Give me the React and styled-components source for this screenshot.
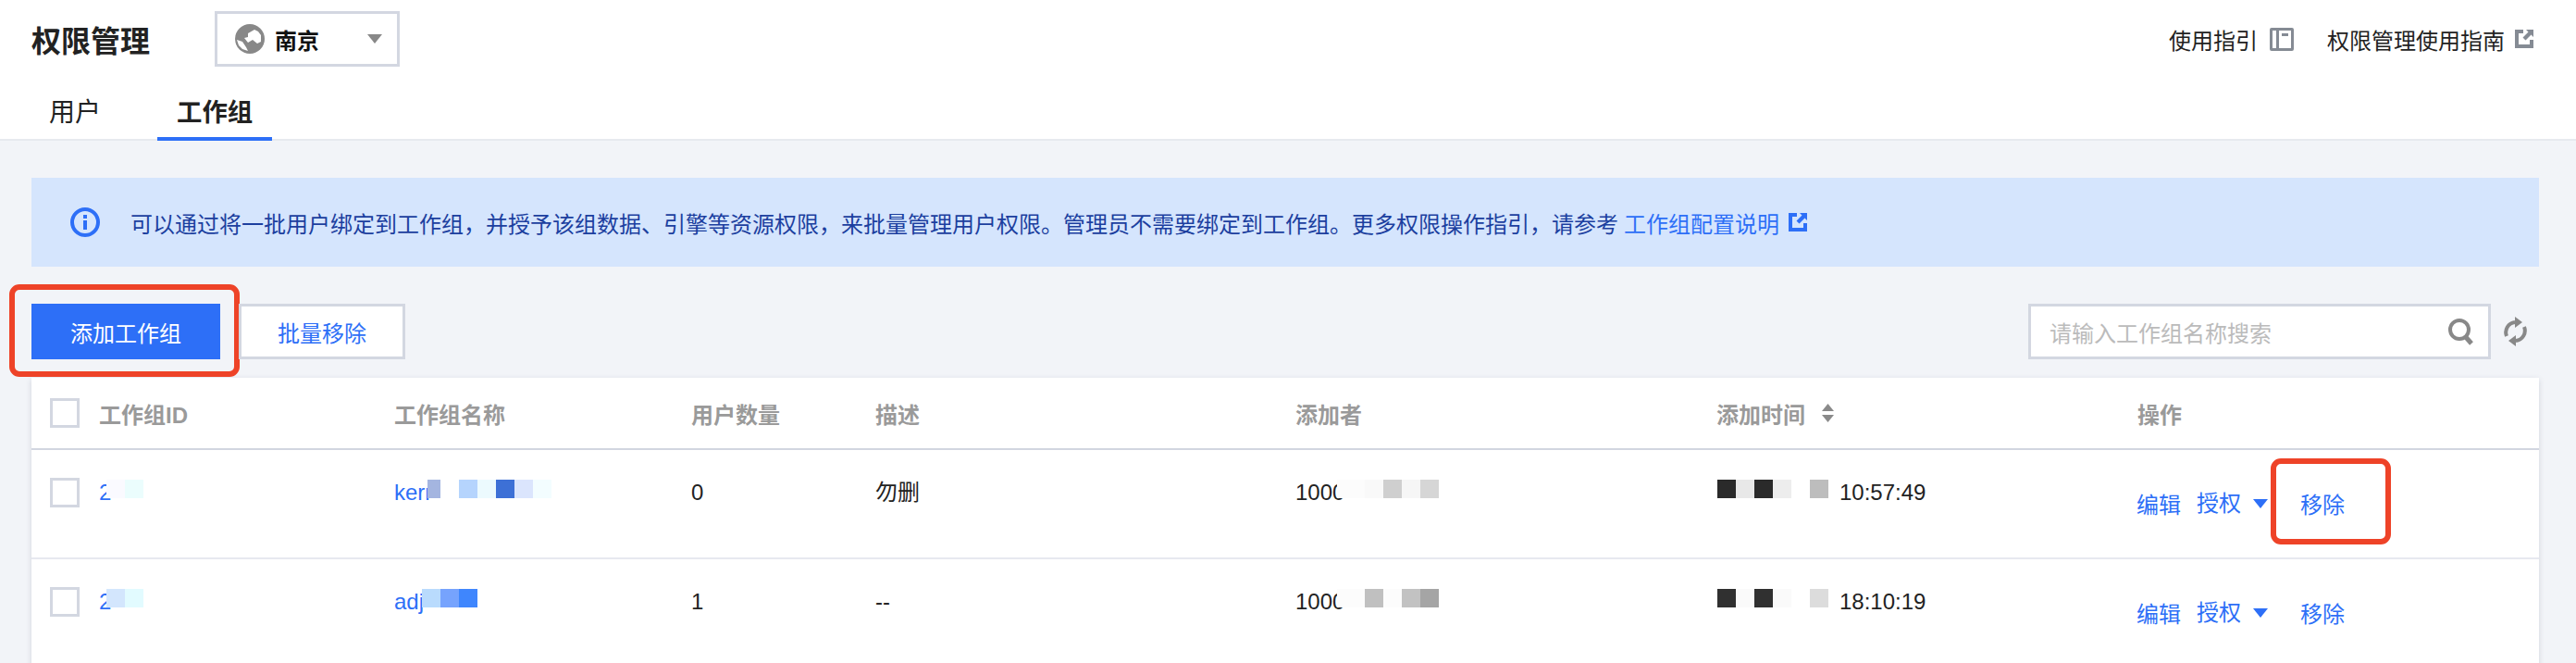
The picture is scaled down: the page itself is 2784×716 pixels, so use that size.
import React from "react";
import styled, { createGlobalStyle } from "styled-components";

const BLUE = "#2d6ff7";

const GlobalStyle = createGlobalStyle`
  html, body {
    margin: 0;
    padding: 0;
    background: #f2f4f8;
  }
  body {
    font-family: "Liberation Sans", "Noto Sans CJK SC", sans-serif;
    font-size: 24px;
    color: #222;
  }
`;

const columns = [
  { title: "工作组ID", width: 372 },
  { title: "工作组名称", width: 321 },
  { title: "用户数量", width: 199 },
  { title: "描述", width: 454 },
  { title: "添加者", width: 455 },
  { title: "添加时间", width: 455, sortable: true },
  { title: "操作", width: 414 },
];
const gridTemplate = columns.map((c) => `${c.width}px`).join(" ");

const rows = [
  {
    id: "2",
    idBlocks: ["#fafaff", "#ebfdfd"],
    name: "kerr",
    nameLeft: 36,
    nameBlocks: [
      ["#a4b5e0", 14],
      ["#ffffff", 20],
      "#b5d4fd",
      "#ecfafe",
      "#3d70d6",
      "#dbe5fd",
      "#f3fdff",
    ],
    count: "0",
    desc: "勿删",
    creatorBlocks: [
      ["#fcfcfc", 30],
      "#f9f9f9",
      "#cfcfcf",
      "#f6f6f6",
      "#d6d6d6",
    ],
    timeBlocks: [
      "#2a2a2a",
      "#e8e8e8",
      "#2a2a2a",
      "#ededed",
      "#ffffff",
      "#bdbdbd",
    ],
    time: "10:57:49",
    highlight: true,
  },
  {
    id: "2",
    idBlocks: ["#d3e6fd", "#e2fbff"],
    name: "adj",
    nameLeft: 30,
    nameBlocks: ["#b9dbfd", "#76a3fd", "#3f86fd"],
    count: "1",
    desc: "--",
    creatorBlocks: [
      ["#fcfcfc", 30],
      "#c0c0c0",
      "#fcfcfc",
      "#c2c2c2",
      "#a5a5a5",
    ],
    timeBlocks: [
      "#303030",
      "#fafafa",
      "#303030",
      "#fafafa",
      "#ffffff",
      "#dcdcdc",
    ],
    time: "18:10:19",
  },
];

const GlobeIcon = () => (
  <svg width="32" height="32" viewBox="0 0 32 32">
    <circle cx="16" cy="16" r="16" fill="#888" />
    <path
      d="M21 6l-7 4v4l-4 1 4 5 5-3 5 4 4-2v-7l-3-4z"
      fill="#fff"
    />
    <path d="M2 17l6 2 4 6 2 4-6-2-4-4z" fill="#fff" />
  </svg>
);

const InfoIcon = () => (
  <svg width="32" height="32" viewBox="0 0 32 32">
    <circle cx="16" cy="16" r="14" fill="none" stroke={BLUE} strokeWidth="4" />
    <rect x="14" y="14" width="4" height="10" fill={BLUE} />
    <rect x="14" y="8" width="4" height="4" fill={BLUE} />
  </svg>
);

const BookIcon = () => (
  <svg width="26" height="25" viewBox="0 0 26 25">
    <path
      d="M2 0h22a2 2 0 0 1 2 2v21a2 2 0 0 1-2 2H2a2 2 0 0 1-2-2V2a2 2 0 0 1 2-2zm1 3v19h4V3H3zm7 0v19h13V3H10zm3 3h7v3h-7V6z"
      fill="#858b94"
      fillRule="evenodd"
    />
  </svg>
);

const ExternalIcon = ({ color }) => (
  <svg width="20" height="20" viewBox="0 0 20 20">
    <path d="M0 0h9v4H4v12h12v-5h4v9H0z" fill={color} />
    <path d="M12 0h8v8l-2.5-2.5-6 6-3-3 6-6z" fill={color} />
  </svg>
);

const SearchIcon = () => (
  <svg width="28" height="29" viewBox="0 0 28 29">
    <circle cx="12" cy="12" r="10" fill="none" stroke="#888" strokeWidth="4" />
    <path d="M18 19l7 8" stroke="#888" strokeWidth="5" />
  </svg>
);

const RefreshIcon = () => (
  <svg width="25" height="32" viewBox="0 0 25 32">
    <path
      d="M3 21A11 11 0 0 1 12 6"
      fill="none"
      stroke="#888"
      strokeWidth="4"
    />
    <path d="M22 11A11 11 0 0 1 13 26" fill="none" stroke="#888" strokeWidth="4" />
    <path d="M12 0l8 6-8 6z" fill="#888" />
    <path d="M13 20l-8 6 8 6z" fill="#888" />
  </svg>
);

const SortIcon = () => (
  <svg width="17" height="20" viewBox="0 0 17 20">
    <path d="M8.5 0L15 8H2zM8.5 20L2 12h13z" fill="#8a8a8a" />
  </svg>
);

const Page = styled.div`
  width: 2784px;
  height: 716px;
  overflow: hidden;
  background: #f2f4f8;
`;

const Header = styled.header`
  height: 150px;
  background: #fff;
  border-bottom: 2px solid #e7eaef;
  padding: 0 46px 0 34px;
`;

const TopBar = styled.div`
  height: 84px;
  display: flex;
  align-items: center;
`;

const Title = styled.h1`
  width: 198px;
  margin: 0;
  font-size: 32px;
  font-weight: 700;
  color: #222;
`;

const RegionSelect = styled.div`
  width: 200px;
  height: 60px;
  box-sizing: border-box;
  border: 3px solid #d3d7e1;
  display: flex;
  align-items: center;
  padding-left: 19px;
  gap: 11px;
  font-weight: 700;
  color: #111;
`;

const RegionName = styled.span`
  flex: 1;
`;

const Caret = styled.i`
  width: 0;
  height: 0;
  border-left: 8px solid transparent;
  border-right: 8px solid transparent;
  border-top: 10px solid ${(p) => p.$color};
`;

const RegionCaret = styled(Caret)`
  margin-right: 16px;
`;

const HelpLinks = styled.nav`
  margin-left: auto;
  display: flex;
  align-items: center;
  gap: 36px;
`;

const HelpLink = styled.span`
  display: flex;
  align-items: center;
  gap: ${(p) => p.$gap}px;
`;

const Tabs = styled.div`
  height: 68px;
  display: flex;
  gap: 42px;
`;

const Tab = styled.div`
  box-sizing: border-box;
  height: 68px;
  padding: 20px ${(p) => (p.$active ? 21 : 19)}px 0;
  font-size: ${(p) => (p.$active ? 27.4 : 28)}px;
  line-height: 36px;
  font-weight: ${(p) => (p.$active ? 700 : 400)};
  border-bottom: 4px solid ${(p) => (p.$active ? BLUE : "transparent")};
`;

const Main = styled.main`
  padding: 40px 40px 0 34px;
`;

const Banner = styled.div`
  height: 96px;
  background: #d5e5fd;
  display: flex;
  align-items: center;
  padding-left: 42px;
  gap: 33px;
  color: #1c3f9f;
`;

const BannerLink = styled.a`
  display: inline-flex;
  align-items: center;
  gap: 10px;
  margin-left: 6px;
  color: ${BLUE};
`;

const BannerText = styled.p`
  margin: 0;
  display: flex;
  align-items: center;
`;

const Toolbar = styled.div`
  height: 60px;
  margin-top: 40px;
  display: flex;
  align-items: center;
  gap: 20px;
`;

const Button = styled.button`
  position: relative;
  height: 60px;
  width: ${(p) => p.$width}px;
  box-sizing: border-box;
  font: inherit;
  padding: 0;
  border: ${(p) => (p.$primary ? "none" : "3px solid #d3d7e1")};
  background: ${(p) => (p.$primary ? BLUE : "#fff")};
  color: ${(p) => (p.$primary ? "#fff" : BLUE)};
`;

const Marker = styled.span`
  position: absolute;
  top: ${(p) => p.$top}px;
  right: ${(p) => p.$right}px;
  bottom: ${(p) => p.$bottom}px;
  left: ${(p) => p.$left}px;
  border: 6px solid #ee4328;
  border-radius: 11px;
  pointer-events: none;
`;

const SearchGroup = styled.div`
  margin-left: auto;
  display: flex;
  align-items: center;
  margin-right: 13px;
  gap: 14px;
`;

const SearchBox = styled.div`
  width: 500px;
  height: 60px;
  box-sizing: border-box;
  background: #fff;
  border: 3px solid #d3d7e1;
  display: flex;
  align-items: center;
  justify-content: space-between;
  padding: 0 15px 0 20px;
  color: #bbb;
`;

const Table = styled.div`
  margin-top: 20px;
  background: #fff;
  box-shadow: 0 2px 6px rgba(60, 70, 100, 0.18);
`;

const HeadRow = styled.div`
  display: grid;
  grid-template-columns: ${gridTemplate};
  height: 76px;
  align-items: center;
  padding-left: 20px;
  border-bottom: 2px solid #d2d6e0;
  font-weight: 700;
  color: #9a9a9a;
`;

const HeadCell = styled.div`
  display: flex;
  align-items: center;
  gap: ${(p) => p.$gap}px;
`;

const Row = styled.div`
  display: grid;
  grid-template-columns: ${gridTemplate};
  box-sizing: border-box;
  height: 118px;
  padding: 28px 0 0 20px;
  align-items: start;
  line-height: 36px;
  border-bottom: 2px solid #e7e9f0;
`;

const Check = styled.span`
  width: 32px;
  height: 32px;
  flex: none;
  box-sizing: border-box;
  background: #fff;
  border: 3px solid #d3d7e1;
`;

const IdCell = styled.div`
  display: flex;
  align-items: center;
  gap: 21px;
  height: 36px;
`;

const Cell = styled.div`
  position: relative;
  height: 36px;
  color: ${(p) => p.$color || "#222"};
  padding-left: ${(p) => p.$indent || 0}px;
`;

const Mosaic = styled.div`
  position: absolute;
  top: 4px;
  left: ${(p) => p.$left}px;
  display: flex;
  height: 20px;
`;

const Block = styled.i`
  display: block;
  height: 20px;
  width: ${(p) => p.$w}px;
  background: ${(p) => p.$color};
`;

const Actions = styled.div`
  display: flex;
  align-items: center;
  height: 36px;
  margin: 14px 0 0 -1px;
  color: ${BLUE};
`;

const Action = styled.span`
  position: relative;
  margin-left: ${(p) => p.$gap}px;
`;

const GrantAction = styled(Action)`
  margin-bottom: 4px;
`;

const ActionCaret = styled(Caret)`
  margin: 0 0 4px 13px;
`;

const Blocks = ({ left, items }) => (
  <Mosaic $left={left}>
    {items.map((item, i) => {
      const [color, w] = Array.isArray(item) ? item : [item, 20];
      return <Block key={i} $color={color} $w={w} />;
    })}
  </Mosaic>
);

export default function App() {
  return (
    <Page>
      <GlobalStyle />
      <Header>
        <TopBar>
          <Title>权限管理</Title>
          <RegionSelect>
            <GlobeIcon />
            <RegionName>南京</RegionName>
            <RegionCaret $color="#888" />
          </RegionSelect>
          <HelpLinks>
            <HelpLink $gap={13}>
              使用指引
              <BookIcon />
            </HelpLink>
            <HelpLink $gap={11}>
              权限管理使用指南
              <ExternalIcon color="#858b94" />
            </HelpLink>
          </HelpLinks>
        </TopBar>
        <Tabs>
          <Tab>用户</Tab>
          <Tab $active>工作组</Tab>
        </Tabs>
      </Header>
      <Main>
        <Banner>
          <InfoIcon />
          <BannerText>
            可以通过将一批用户绑定到工作组，并授予该组数据、引擎等资源权限，来批量管理用户权限。管理员不需要绑定到工作组。更多权限操作指引，请参考
            <BannerLink>
              工作组配置说明
              <ExternalIcon color={BLUE} />
            </BannerLink>
          </BannerText>
        </Banner>
        <Toolbar>
          <Button $primary $width={204}>
            添加工作组
            <Marker $top={-21} $right={-21} $bottom={-19} $left={-24} />
          </Button>
          <Button $width={180}>批量移除</Button>
          <SearchGroup>
            <SearchBox>
              请输入工作组名称搜索
              <SearchIcon />
            </SearchBox>
            <RefreshIcon />
          </SearchGroup>
        </Toolbar>
        <Table>
          <HeadRow>
            {columns.map((col, i) => (
              <HeadCell key={col.title} $gap={i === 0 ? 21 : 16}>
                {i === 0 && <Check />}
                {col.title}
                {col.sortable && <SortIcon />}
              </HeadCell>
            ))}
          </HeadRow>
          {rows.map((row, i) => (
            <Row key={i}>
              <IdCell>
                <Check />
                <Cell $color={BLUE}>
                  {row.id}
                  <Blocks left={8} items={row.idBlocks} />
                </Cell>
              </IdCell>
              <Cell $color={BLUE}>
                {row.name}
                <Blocks left={row.nameLeft} items={row.nameBlocks} />
              </Cell>
              <Cell>{row.count}</Cell>
              <Cell>{row.desc}</Cell>
              <Cell>
                1000
                <Blocks left={45} items={row.creatorBlocks} />
              </Cell>
              <Cell $indent={133}>
                {row.time}
                <Blocks left={1} items={row.timeBlocks} />
              </Cell>
              <Actions>
                <span>编辑</span>
                <GrantAction $gap={17}>授权</GrantAction>
                <ActionCaret $color={BLUE} />
                <Action $gap={35}>
                  移除
                  {row.highlight && (
                    <Marker $top={-33} $right={-50} $bottom={-24} $left={-32} />
                  )}
                </Action>
              </Actions>
            </Row>
          ))}
        </Table>
      </Main>
    </Page>
  );
}
